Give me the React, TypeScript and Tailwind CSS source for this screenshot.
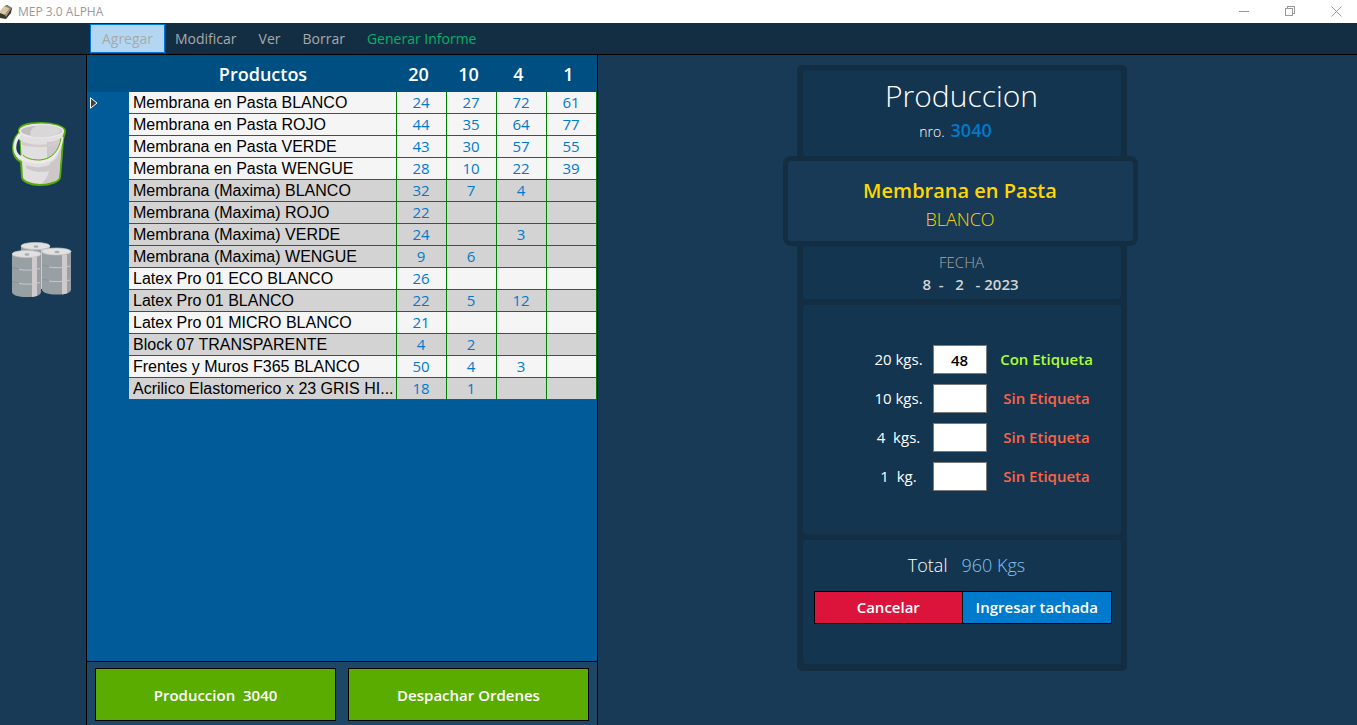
import type { ReactNode } from "react";

type Product = { name: string; stock: (number | null)[]; muted?: boolean };

const sizes = ["20", "10", "4", "1"];

const products: Product[] = [
  { name: "Membrana en Pasta BLANCO", stock: [24, 27, 72, 61] },
  { name: "Membrana en Pasta ROJO", stock: [44, 35, 64, 77] },
  { name: "Membrana en Pasta VERDE", stock: [43, 30, 57, 55] },
  { name: "Membrana en Pasta WENGUE", stock: [28, 10, 22, 39] },
  { name: "Membrana (Maxima) BLANCO", stock: [32, 7, 4, null], muted: true },
  { name: "Membrana (Maxima) ROJO", stock: [22, null, null, null], muted: true },
  { name: "Membrana (Maxima) VERDE", stock: [24, null, 3, null], muted: true },
  { name: "Membrana (Maxima) WENGUE", stock: [9, 6, null, null], muted: true },
  { name: "Latex Pro 01 ECO BLANCO", stock: [26, null, null, null] },
  { name: "Latex Pro 01 BLANCO", stock: [22, 5, 12, null], muted: true },
  { name: "Latex Pro 01 MICRO BLANCO", stock: [21, null, null, null] },
  { name: "Block 07 TRANSPARENTE", stock: [4, 2, null, null], muted: true },
  { name: "Frentes y Muros F365 BLANCO", stock: [50, 4, 3, null] },
  { name: "Acrilico Elastomerico x 23 GRIS HI...", stock: [18, 1, null, null], muted: true },
];

const amounts = [
  { id: "kg20", label: "20 kgs.", value: "48", tagged: true },
  { id: "kg10", label: "10 kgs.", value: "", tagged: false },
  { id: "kg4", label: "4  kgs.", value: "", tagged: false },
  { id: "kg1", label: "1  kg.", value: "", tagged: false },
];

function TitleBar() {
  return (
    <header className="flex h-[23px] shrink-0 items-center justify-between bg-white text-[#999999]">
      <div className="flex items-center gap-[5px]">
        <svg width="13" height="17" viewBox="0 0 13 17" aria-hidden="true">
          <path d="M0 9 5 3l2-1 5 3-1 5-5 6-6-1z" fill="#3a352d" />
          <path d="M0 8 5 3l5 2-5 7-5-2z" fill="#d8c7a3" />
          <path d="M5 3 7 2l5 3-2 1z" fill="#8d8371" />
          <path d="m5 12 5-7 1 1-5 8z" fill="#a89c84" />
        </svg>
        <h1 className="text-xs">MEP 3.0 ALPHA</h1>
      </div>
      <div className="flex h-full items-center gap-[35px] pr-[15px]">
        <button aria-label="Minimizar">
          <svg width="11" height="11" viewBox="0 0 11 11" fill="none" stroke="currentColor" shapeRendering="crispEdges">
            <path d="M0 5.5h10" />
          </svg>
        </button>
        <button aria-label="Restaurar">
          <svg width="11" height="11" viewBox="0 0 11 11" fill="none" stroke="currentColor" shapeRendering="crispEdges">
            <path d="M.5 2.5h7v7h-7zM2.500 2V.5h7v7H8" />
          </svg>
        </button>
        <button aria-label="Cerrar">
          <svg width="11" height="11" viewBox="0 0 11 11" fill="none" stroke="currentColor">
            <path d="m.5.5 10 10M10.500.5l-10 10" />
          </svg>
        </button>
      </div>
    </header>
  );
}

function MenuBar() {
  return (
    <nav className="flex h-8 shrink-0 items-center border-b border-black bg-[#132e43] pl-[90px] text-sm text-[#a9a9a9]">
      <button className="h-[29px] w-[75px] border border-[#0078d7] bg-[#b3d7f3]">Agregar</button>
      <button className="ml-[10px]">Modificar</button>
      <button className="ml-[22px]">Ver</button>
      <button className="ml-[22px]">Borrar</button>
      <button className="ml-[22px] text-[#00b368]">Generar Informe</button>
    </nav>
  );
}

function BucketIcon() {
  return (
    <svg width="54" height="64" viewBox="0 0 54 64" fill="none">
      <path
        d="M7 8C8 3 18 1 29 1s24 3 24 8c0 3-2 6-2 9l-3 37c0 4-9 8-20 8-10 0-18-4-18-8L9 40C3 37 1 32 1 26c0-6 2-11 6-15z"
        fill="#e2dfe0"
        stroke="#56ab08"
        strokeWidth="2"
      />
      <path d="M35 20c7 0 11-2 15-4l-3 39c-1 3-9 6-18 7 6-5 9-12 9-21 4-2 7-5 9-9-4 4-8 5-12 5z" fill="#cec7c9" />
      <path d="M9 19c11 5 29 5 40-1v4c-10 4-28 4-39 1z" fill="#d3ccce" />
      <path d="M14 43c8 3 17 3 25-1l-1 7c-8 2-18 1-24-3z" fill="#cec7c9" />
      <ellipse cx="29.500" cy="9" rx="21.500" ry="6.500" fill="#c1bec0" stroke="#e9e7e8" strokeWidth="2" />
      <path d="M24 4c-6 3-7 8-4 11 9 1 21 0 29-5 1-5-12-9-25-6z" fill="#d9d7d8" />
      <path d="M6 17C2 24 2 31 7 35l2 1-1-18z" fill="#183a56" />
      <path d="M8 12C1 21 1 31 8 35c6 4 12 5 20 5 14-1 20-10 22-25" stroke="#eceaeb" strokeWidth="3" />
      <path d="M11 33c4 4 10 5 17 5 12-1 19-9 21-22M8 18l1 15" stroke="#56ab08" />
    </svg>
  );
}

function Drum() {
  return (
    <>
      <path d="M0 4v38c0 3 6 5 15 5s14-2 14-5V4z" fill="#98a0a4" />
      <path d="M20 7h5v39l-5 1z" fill="#d1cacd" />
      <path d="M7 19.500c6 1 15 1 21-1M7 33.500c6 1 15 1 21-1" fill="none" stroke="#c7cbcc" />
      <path d="M0 17.500l7 1.500M0 31.500l7 1.500" fill="none" stroke="#87929a" />
      <ellipse cx="14.500" cy="4" rx="14.500" ry="3.500" fill="#e2e0e1" stroke="#c3c7c9" strokeWidth=".7" />
      <ellipse cx="15" cy="4.500" rx="2.500" ry="1.300" fill="#a7acaf" />
    </>
  );
}

function DrumsIcon() {
  return (
    <svg width="60" height="57" viewBox="0 0 60 57">
      <g transform="translate(9 0)"><Drum /></g>
      <g transform="translate(30 5.500)"><Drum /></g>
      <g transform="translate(0 8)"><Drum /></g>
    </svg>
  );
}

function ProductTable() {
  return (
    <table className="w-full table-fixed border-separate border-spacing-0">
      <colgroup>
        <col className="w-[42px]" />
        <col />
        {sizes.map((s) => (
          <col key={s} className="w-[50px]" />
        ))}
      </colgroup>
      <thead>
        <tr className="h-[37px] bg-[#004f83] text-lg leading-6 text-white">
          <th aria-label="Fila" />
          <th className="font-semibold">Productos</th>
          {sizes.map((s) => (
            <th key={s} className="pr-[7px] font-semibold">{s}</th>
          ))}
        </tr>
      </thead>
      <tbody>
        {products.map((p, i) => (
          <tr key={p.name} className={p.muted ? "h-[22px] bg-[#d3d3d3]" : "h-[22px] bg-[#f5f5f5]"}>
            <td className="bg-[#005b98] p-0 pl-[3px]">
              {i === 0 && (
                <svg width="8" height="12" viewBox="0 0 8 12" aria-label="Fila actual">
                  <path d="M.5.800v10.400L7 6z" fill="#404040" stroke="#fff" />
                </svg>
              )}
            </td>
            <td className="border-r border-b border-[#008000] p-0 pl-1 font-['Liberation_Sans',sans-serif] text-base leading-[21px] whitespace-nowrap text-black">
              {p.name}
            </td>
            {p.stock.map((n, c) => (
              <td key={sizes[c]} className="border-r border-b border-[#008000] p-0 pr-px text-center text-[15px] leading-[21px] text-[#007acc]">
                {n}
              </td>
            ))}
          </tr>
        ))}
      </tbody>
    </table>
  );
}

function Section({ className, children }: { className: string; children: ReactNode }) {
  return <div className={`mx-[6px] rounded-[3px] bg-[#133550] ${className}`}>{children}</div>;
}

function ProductionForm() {
  return (
    <form className="w-[330px] rounded-[5px] bg-[#132e43] pt-[5px] pb-[7px]" onSubmit={(e) => e.preventDefault()}>
      <Section className="h-[86px] pt-[6px] text-center">
        <h2 className="text-[30px] leading-10 font-light text-white">Produccion</h2>
        <p className="flex items-baseline justify-center gap-[6px] pr-3 text-sm leading-7 font-light text-white">
          nro. <strong className="text-lg leading-7 font-semibold text-[#007acc]">3040</strong>
        </p>
      </Section>
      <div className="-mr-[11px] -ml-[14px] flex h-[90px] flex-col items-center rounded-lg border-5 border-[#132e43] bg-[#183a56] pt-[14px] text-[#ffd700]">
        <p className="text-xl leading-8 font-semibold">Membrana en Pasta</p>
        <p className="text-lg leading-6 font-light">BLANCO</p>
      </div>
      <Section className="flex h-[53px] flex-col items-center pt-[5px]">
        <label htmlFor="fecha" className="text-[15px] leading-[22px] font-light text-[#a9a9a9]">FECHA</label>
        <input
          id="fecha"
          defaultValue="8  -   2   - 2023"
          className="w-[140px] pl-[18px] text-center text-[15px] leading-[22px] font-semibold text-[#d3d3d3]"
        />
      </Section>
      <Section className="mt-[6px] flex h-[229px] flex-col gap-[10px] pt-10 pl-[62px] text-[15px]">
        {amounts.map((a) => (
          <div key={a.id} className="flex h-[29px] items-center">
            <label htmlFor={a.id} className="w-[68px] text-center whitespace-pre text-white">{a.label}</label>
            <input
              id={a.id}
              defaultValue={a.value}
              className="h-[29px] w-[54px] border border-[#7a7a7a] bg-white text-center font-semibold text-black"
            />
            <span className={a.tagged ? "w-[120px] text-center font-semibold text-[#adff2f]" : "w-[120px] text-center font-semibold text-[#ff6347]"}>
              {a.tagged ? "Con Etiqueta" : "Sin Etiqueta"}
            </span>
          </div>
        ))}
      </Section>
      <Section className="mt-[6px] h-[124px] pt-[11px] pr-[9px] pl-[11px]">
        <p className="flex justify-center gap-[14px] pl-2 text-lg leading-7 font-light text-white">
          Total <output className="text-[#7fc1ee]">960 Kgs</output>
        </p>
        <div className="mt-3 flex h-[33px] border border-black text-[15px] font-semibold text-white">
          <button type="button" className="flex-1 border-r border-black bg-[#dc143c]">Cancelar</button>
          <button type="submit" className="flex-1 bg-[#007acc]">Ingresar tachada</button>
        </div>
      </Section>
    </form>
  );
}

export default function App() {
  return (
    <div className="flex min-h-screen flex-col bg-[#183a56] font-['Open_Sans','Noto_Sans',sans-serif]">
      <TitleBar />
      <MenuBar />
      <div className="flex flex-1">
        <aside className="flex w-[86px] shrink-0 flex-col items-start gap-14 pt-[67px] pl-3">
          <button aria-label="Baldes"><BucketIcon /></button>
          <button aria-label="Tambores"><DrumsIcon /></button>
        </aside>
        <section className="flex w-[512px] shrink-0 flex-col border-x border-black bg-[#005b98]">
          <ProductTable />
          <div className="mt-auto flex h-16 gap-3 border-t border-black bg-[#1d4667] px-2 pt-[6px] pb-1 text-[15px] font-semibold text-white">
            <button className="flex-1 border border-black bg-[#5aad00] pt-px whitespace-pre">Produccion  3040</button>
            <button className="flex-1 border border-black bg-[#5aad00] pt-px">Despachar Ordenes</button>
          </div>
        </section>
        <main className="flex flex-1 items-start justify-center pt-[10px] pr-8">
          <ProductionForm />
        </main>
      </div>
    </div>
  );
}
